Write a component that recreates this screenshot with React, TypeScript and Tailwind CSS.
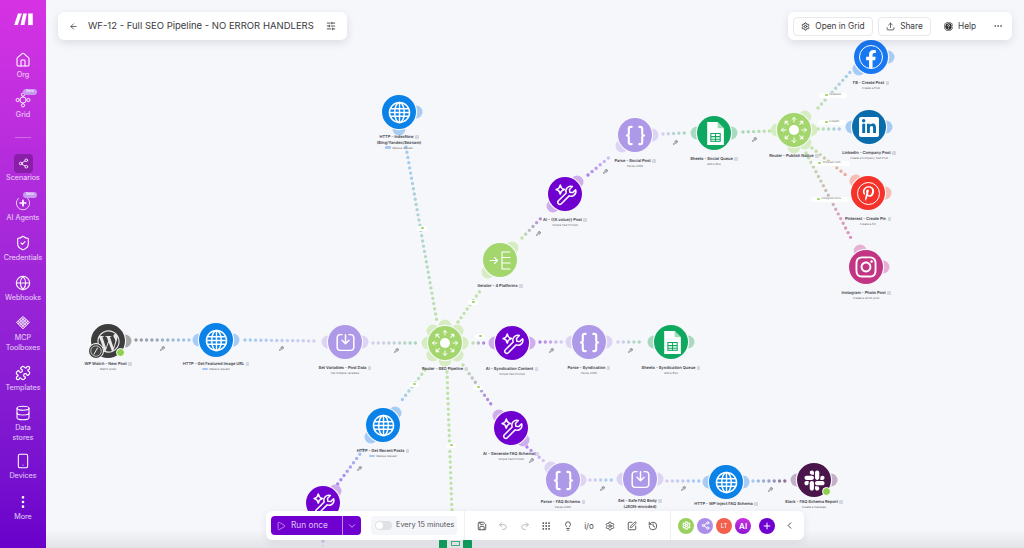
import type { ReactNode } from 'react';
import {
  ArrowLeft, Braces, CircleHelp, Database, Ellipsis, EllipsisVertical, Globe, History, House, Lightbulb, Play,
  Puzzle, Redo2, Save, Settings, Share2, ShieldCheck, Smartphone, SlidersHorizontal, SquarePen, Undo2, Upload,
  Wrench, ChevronDown, ChevronLeft, Plus, Grip,
} from 'lucide-react';
import { FaFacebookF, FaInstagram, FaLinkedinIn, FaPinterestP, FaSlack, FaWordpressSimple } from 'react-icons/fa';

const BLUE = '#0a82e8';
const VIOLET = '#7000d0';
const LILAC = '#ae98e8';
const GREEN = '#a4d66e';
const SHEET = '#0fa861';

type Kind = 'globe' | 'ai' | 'parse' | 'set' | 'sheet' | 'router' | 'iter' | 'fb' | 'li' | 'pin' | 'ig' | 'slack' | 'wp';

interface FlowNode {
  x: number;
  y: number;
  kind: Kind;
  label: string[];
  sub?: string;
  chip?: boolean;
  dy?: number;
  handles: [number, string][];
}

const hBlue = '#a6cbf4';
const hLilac = '#dcd3f5';
const hPurple = '#cfaeec';
const hGreen = '#d6edc2';
const hSheet = '#a9dabf';

const NODES: FlowNode[] = [
  { x: 108, y: 341, kind: 'wp', label: ['WP Watch - New Post'], sub: 'Watch posts', dy: 37, handles: [[0, '#a8a8a8']] },
  { x: 216, y: 340, kind: 'globe', label: ['HTTP - Get Featured Image URL'], sub: 'Make a request', chip: true, dy: 38, handles: [[180, hBlue], [0, hBlue]] },
  { x: 345, y: 342, kind: 'set', label: ['Set Variables - Post Data'], sub: 'Set multiple variables', handles: [[180, hLilac], [0, hLilac]] },
  { x: 445, y: 343, kind: 'router', label: ['Router - SEO Pipeline'], handles: [[180, hGreen], [0, hGreen], [-90, hGreen], [-45, hGreen], [-135, hGreen], [135, hGreen], [90, hGreen], [45, hGreen]] },
  { x: 512, y: 343, kind: 'ai', label: ['AI - Syndication Content'], sub: 'Simple Text Prompt', handles: [[180, hPurple], [0, hPurple]] },
  { x: 589, y: 342, kind: 'parse', label: ['Parse - Syndication'], sub: 'Parse JSON', handles: [[180, hLilac], [0, hLilac]] },
  { x: 671, y: 342, kind: 'sheet', label: ['Sheets - Syndication Queue'], sub: 'Add a Row', handles: [[180, hSheet], [0, hSheet]] },
  { x: 399, y: 112, kind: 'globe', label: ['HTTP - IndexNow', '(Bing/Yandex/Seznam)'], sub: 'Make a request', chip: true, dy: 39, handles: [[0, hBlue], [90, hBlue]] },
  { x: 500, y: 260, kind: 'iter', label: ['Iterator - 4 Platforms'], handles: [[-45, hGreen], [135, hGreen]] },
  { x: 565, y: 194, kind: 'ai', label: ['AI - {{8.value}} Post'], sub: 'Simple Text Prompt', handles: [[-45, hPurple], [135, hPurple]] },
  { x: 635, y: 135, kind: 'parse', label: ['Parse - Social Post'], sub: 'Parse JSON', handles: [[0, hLilac], [140, hLilac]] },
  { x: 714, y: 133, kind: 'sheet', label: ['Sheets - Social Queue'], sub: 'Add a Row', handles: [[180, hSheet], [0, hSheet]] },
  { x: 794, y: 130, kind: 'router', label: ['Router - Publish Native'], handles: [[180, hGreen], [0, hGreen], [-50, hGreen], [50, hGreen], [90, hGreen]] },
  { x: 871, y: 57, kind: 'fb', label: ['FB - Create Post'], sub: 'Create a Post', handles: [[0, hBlue], [135, hBlue]] },
  { x: 869, y: 127, kind: 'li', label: ['LinkedIn - Company Post'], sub: 'Create a Company Text Post', handles: [[180, hBlue], [0, hBlue]] },
  { x: 868, y: 193, kind: 'pin', label: ['Pinterest - Create Pin'], sub: 'Create a Pin', handles: [[-135, '#f7bcb4'], [0, '#f7bcb4']] },
  { x: 866, y: 267, kind: 'ig', label: ['Instagram - Photo Post'], sub: 'Create a photo post', handles: [[-110, '#e6b0d4'], [0, '#e6b0d4']] },
  { x: 383, y: 425, kind: 'globe', label: ['HTTP - Get Recent Posts'], sub: 'Make a request', chip: true, handles: [[-45, hBlue], [135, hBlue]] },
  { x: 511, y: 428, kind: 'ai', label: ['AI - Generate FAQ Schema'], sub: 'Simple Text Prompt', handles: [[-135, hPurple], [45, hPurple]] },
  { x: 563, y: 480, kind: 'parse', label: ['Parse - FAQ Schema'], sub: 'Parse JSON', dy: 36, handles: [[-135, hLilac], [0, hLilac]] },
  { x: 640, y: 479, kind: 'set', label: ['Set - Safe FAQ Body', '(JSON-encoded)'], dy: 36, handles: [[180, hLilac], [0, hLilac]] },
  { x: 726, y: 482, kind: 'globe', label: ['HTTP - WP Inject FAQ Schema'], dy: 36, handles: [[180, hBlue], [0, hBlue]] },
  { x: 814, y: 480, kind: 'slack', label: ['Slack - FAQ Schema Report'], sub: 'Create a message', dy: 36, handles: [[180, '#c3b0c6'], [0, '#c3b0c6']] },
  { x: 323, y: 503, kind: 'ai', label: [], handles: [[-45, hPurple]] },
];

const cBlue = '#a3c9f2';
const cLilac = '#d6ccf3';
const cPurple = '#ae7fe9';
const cGreen = '#bde3a6';
const cTeal = '#a5d8ba';

const EDGES: [number, number, number, number, string, string][] = [
  [136, 340, 190, 340, '#94979b', cBlue],
  [245, 340, 318, 341, cBlue, cLilac],
  [373, 343, 417, 343, cLilac, cTeal],
  [473, 343, 485, 343, cGreen, cPurple],
  [540, 342, 562, 342, cPurple, cLilac],
  [618, 342, 642, 342, cLilac, cTeal],
  [663, 134, 685, 133, cLilac, cTeal],
  [743, 132, 770, 131, cTeal, cGreen],
  [522, 238, 543, 216, cGreen, cPurple],
  [588, 175, 612, 155, cPurple, cLilac],
  [406, 147, 437, 322, cBlue, cGreen],
  [458, 322, 482, 288, cGreen, cGreen],
  [818, 108, 852, 70, cGreen, cBlue],
  [818, 129, 843, 129, cGreen, cBlue],
  [812, 148, 847, 176, cGreen, '#f2a498'],
  [806, 153, 852, 240, cGreen, '#de8cc0'],
  [425, 370, 402, 400, cGreen, cBlue],
  [363, 450, 337, 485, cBlue, cPurple],
  [447, 372, 453, 540, cGreen, cGreen],
  [463, 365, 493, 407, cGreen, cPurple],
  [527, 447, 545, 462, cPurple, cLilac],
  [590, 480, 613, 480, cLilac, cBlue],
  [667, 481, 700, 481, cLilac, cBlue],
  [753, 481, 787, 481, cBlue, '#8d6c92'],
  [323, 520, 323, 548, cPurple, cPurple],
];

const WRENCHES = [
  [162, 348], [281, 348], [396, 350], [551, 350], [630, 350], [359, 468], [531, 460], [605, 171], [538, 233],
  [675, 142], [754, 139], [602, 488], [683, 488], [770, 489],
];

const PILLS: [number, number, number, string][] = [
  [833, 95, 28, 'Facebook'], [832, 122, 28, 'LinkedIn'], [831, 163, 38, 'Pinterest (with ...'], [830, 199, 38, 'Instagram (Inclu...'],
  [480, 336, 10, ''], [414, 384, 10, ''], [478, 387, 10, ''], [451, 445, 9, ''], [422, 228, 10, ''], [473, 302, 10, ''],
];

function GlobeMark() {
  return (
    <svg viewBox="0 0 24 24" className="h-[23px] w-[23px]" fill="none" stroke="white" strokeWidth="1.5">
      <circle cx="12" cy="12" r="10.5" />
      <ellipse cx="12" cy="12" rx="5" ry="10.5" />
      <path d="M12 1.5v21M2.2 8h19.6M1.5 12h21M2.2 16h19.6" />
    </svg>
  );
}

function AiMark() {
  return (
    <svg viewBox="0 0 24 24" className="h-[25px] w-[25px]" fill="none" stroke="white" strokeWidth="1.5" strokeLinejoin="round">
      <path d="M7 3c.5 2.8 1.4 3.7 4 4.3-2.6.6-3.5 1.5-4 4.3-.5-2.8-1.4-3.7-4-4.3 2.6-.6 3.5-1.5 4-4.3Z" />
      <path d="M21.5 6.8a5 5 0 0 1-6.6 6.3l-8 8a2.1 2.1 0 0 1-3-3l8-8a5 5 0 0 1 6.3-6.6l-3 3 .4 2.9 2.9.4 3-3Z" transform="translate(1.5 1) scale(.94)" />
    </svg>
  );
}

function SetMark() {
  return (
    <svg viewBox="0 0 24 24" className="h-[21px] w-[21px]" fill="none" stroke="white" strokeWidth="1.7" strokeLinecap="round" strokeLinejoin="round">
      <path d="M8 3H6a3.5 3.5 0 0 0-3.5 3.5v11A3.5 3.5 0 0 0 6 21h12a3.5 3.5 0 0 0 3.5-3.5v-11A3.5 3.5 0 0 0 18 3h-2" />
      <path d="M12 3v10M8 9.5l4 4 4-4" />
    </svg>
  );
}

function SheetMark() {
  return (
    <svg viewBox="0 0 24 24" className="h-[25px] w-[25px]">
      <path d="M5 1h10l6 6v16H5z" fill="white" />
      <path d="M15 1v6h6z" fill="#9fdcbc" />
      <path d="M8 11.5h10v8.5H8z" fill={SHEET} />
      <path d="M9 12.5h3.5v2H9zM13.5 12.5H17v2h-3.5zM9 15.5h3.5V17H9zM13.5 15.5H17V17h-3.5zM9 18h3.5v1H9zM13.5 18H17v1h-3.5z" fill="white" />
    </svg>
  );
}

function RouterMark() {
  const angles = [0, 45, 90, 135, 180, 225, 270, 315];
  return (
    <svg viewBox="0 0 34 34" className="h-[34px] w-[34px]" fill="none" stroke="white" strokeWidth="1" strokeLinecap="round" strokeLinejoin="round">
      <circle cx="17" cy="17" r="5" fill="white" stroke="none" />
      {angles.map(a => (
        <g key={a} transform={`rotate(${a} 17 17)`}>
          <path d="M25 17h4.500M27.500 15l2 2-2 2" />
        </g>
      ))}
    </svg>
  );
}

function IterMark() {
  return (
    <svg viewBox="0 0 34 34" className="h-[34px] w-[34px]" fill="none" stroke="white" strokeWidth="1.1" strokeLinecap="round" strokeLinejoin="round">
      <path d="M7 17.5h7M11.5 14.5l3 3-3 3" />
      <path d="M22 9h-3v17h3M19 9h8M19 14.5h8M19 20h8M19 26h8" />
    </svg>
  );
}

function NodeIcon({ kind }: { kind: Kind }) {
  switch (kind) {
    case 'globe': return <GlobeMark />;
    case 'ai': return <AiMark />;
    case 'parse': return <Braces className="h-[23px] w-[23px] text-white" strokeWidth={2.2} />;
    case 'set': return <SetMark />;
    case 'sheet': return <SheetMark />;
    case 'router': return <RouterMark />;
    case 'iter': return <IterMark />;
    case 'fb': return (
      <span className="flex h-[24px] w-[24px] items-end justify-center overflow-hidden rounded-full border-[1.5px] border-white">
        <FaFacebookF className="h-[18px] w-[18px] text-white" />
      </span>
    );
    case 'li': return <FaLinkedinIn className="h-[20px] w-[20px] rounded-[2px] bg-white p-[2px] text-[#0a6cab]" />;
    case 'pin': return <span className="flex h-[23px] w-[23px] items-center justify-center rounded-full border border-white"><FaPinterestP className="h-[15px] w-[15px] text-white" /></span>;
    case 'ig': return <FaInstagram className="h-[24px] w-[24px] text-white" />;
    case 'slack': return <FaSlack className="h-[23px] w-[23px] text-white" />;
    case 'wp': return <FaWordpressSimple className="h-[23px] w-[23px] text-[#e8e8e8]" />;
  }
}

const FILL: Record<Kind, string> = {
  globe: BLUE, ai: VIOLET, parse: LILAC, set: LILAC, sheet: SHEET, router: GREEN, iter: GREEN,
  fb: '#1877f2', li: '#0a6cab', pin: '#f5332a', ig: '#c13584', slack: '#4a154b', wp: '#3d3d3d',
};

function Node({ node }: { node: FlowNode }) {
  return (
    <div className="absolute h-[34px] w-[34px]" style={{ left: node.x - 17, top: node.y - 17 }}>
      <div className="flex h-full w-full items-center justify-center rounded-full" style={{ backgroundColor: FILL[node.kind] }}>
        <NodeIcon kind={node.kind} />
      </div>
      {node.kind === 'wp' && (
        <div className="absolute left-[-3px] top-[19px] flex h-[16px] w-[16px] items-center justify-center rounded-full border border-white bg-[#444]">
          <svg viewBox="0 0 16 16" className="h-[14px] w-[14px]" fill="none" stroke="white" strokeWidth="1">
            <circle cx="8" cy="8" r="6" strokeWidth=".7" />
            <path d="M5.5 12 10 4" />
          </svg>
        </div>
      )}
      {(node.kind === 'wp' || node.kind === 'slack') && (
        <div className="absolute left-[25px] top-[24px] h-[9px] w-[9px] rounded-full border border-white bg-[#8fd14f]" />
      )}
      <div className="absolute left-1/2 flex w-[100px] -translate-x-1/2 flex-col items-center whitespace-nowrap [text-rendering:geometricPrecision]" style={{ top: node.dy ?? 40 }}>
        {node.label.map((line, i) => (
          <div key={line} className="flex items-center gap-[1.5px] text-[4px] font-semibold leading-[5.5px] text-[#3c3c44]">
            {line}
            {i === 0 && <span className="inline-block h-[3.5px] w-[3.5px] rounded-[0.5px] bg-[#d6d8de]" />}
          </div>
        ))}
        {node.sub && (
          <div className="mt-[0.5px] flex items-center gap-[1px] text-[2.8px] leading-[4px] text-[#666]">
            {node.chip && <span className="inline-block h-[2.5px] w-[6px] rounded-[1px] bg-[#a9c6f5]" />}
            {node.sub}
          </div>
        )}
      </div>
    </div>
  );
}

function Graph() {
  return (
    <div className="absolute left-[-46px] top-0 h-[548px] w-[1024px]">
      <svg className="absolute inset-0" width="1024" height="548" viewBox="0 0 1024 548">
        <defs>
          {EDGES.map(([x1, y1, x2, y2, from, to], i) => (
            <linearGradient key={i} id={`edge${i}`} gradientUnits="userSpaceOnUse" x1={x1} y1={y1} x2={x2 + 0.01} y2={y2 + 0.01}>
              <stop offset="0" stopColor={from} />
              <stop offset="1" stopColor={to} />
            </linearGradient>
          ))}
        </defs>
        {EDGES.map(([x1, y1, x2, y2], i) => (
          <line key={i} x1={x1} y1={y1} x2={x2} y2={y2 + 0.01} stroke={`url(#edge${i})`} strokeWidth="3.4" strokeLinecap="round" strokeDasharray="0 5.3" />
        ))}
        {NODES.map((n, i) => n.handles.map(([angle, color]) => (
          <circle
            key={`${i}-${angle}`}
            cx={n.x + 17 * Math.cos((angle * Math.PI) / 180)}
            cy={n.y + 17 * Math.sin((angle * Math.PI) / 180)}
            r="6.5"
            fill={color}
          />
        )))}
        {NODES.map((n, i) => <circle key={i} cx={n.x} cy={n.y} r="18.2" fill="#f6f7fb" />)}
      </svg>
      {NODES.map((n, i) => <Node key={i} node={n} />)}
      {WRENCHES.map(([x, y], i) => (
        <div key={i} className="absolute" style={{ left: x - 2.5, top: y - 2.5 }}>
          <Wrench className="h-[5px] w-[5px] text-[#55585e]" strokeWidth={3} />
        </div>
      ))}
      {PILLS.map(([x, y, w, text], i) => (
        <div
          key={i}
          className="absolute flex h-[5px] items-center justify-center gap-[1.5px] whitespace-nowrap rounded-full bg-white text-[2.6px] text-[#666] [text-rendering:geometricPrecision]"
          style={{ left: x - w / 2, top: y - 2.5, width: w }}
        >
          <span className="h-[1.5px] w-[3px] rounded-full bg-[#9ed36a]" />
          {text}
        </div>
      ))}
    </div>
  );
}

function MakeLogo() {
  return (
    <svg viewBox="0 0 20 14" className="h-[13px] w-[19px]" fill="white">
      <path d="M4 0.5h4.200L3.800 13H0z" />
      <path d="M9.600 0.5h4L11 13H6.800z" />
      <path d="M15 0.5h5V13h-5z" />
    </svg>
  );
}

function GridGlyph() {
  return (
    <svg viewBox="0 0 24 24" className="h-4 w-4" fill="none" stroke="white" strokeWidth="1.4">
      <circle cx="12" cy="12" r="4.6" />
      <circle cx="12" cy="4" r="2.4" />
      <circle cx="12" cy="20" r="2.4" />
      <circle cx="4" cy="12" r="2.4" />
      <circle cx="20" cy="12" r="2.4" />
    </svg>
  );
}

function AgentGlyph() {
  return (
    <svg viewBox="0 0 24 24" className="h-4 w-4" fill="none" stroke="white" strokeWidth="1.4" strokeLinecap="round">
      <path d="M5 5a10 10 0 1 0 14 0" opacity=".8" />
      <path d="M12 8v8M8 12h8" strokeWidth="2.6" />
    </svg>
  );
}

function McpGlyph() {
  return (
    <svg viewBox="0 0 24 24" className="h-4 w-4" fill="none" stroke="white" strokeWidth="1">
      <path d="M12 2 22 11 12 21 2 11Z" fill="white" fillOpacity=".35" />
      <path d="M7 6.5 17 16M9.5 4.2 19.5 13.5M4.5 9 14.5 18.5M17 6.5 7 16M14.5 4.2 4.5 13.5M19.5 9 9.500 18.5" />
    </svg>
  );
}

function NavItem({ icon, label, beta, active, className }: { icon: ReactNode; label: string; beta?: boolean; active?: boolean; className?: string }) {
  return (
    <div className={`relative flex w-full flex-col items-center ${className ?? ''}`}>
      <div className="relative flex h-4 w-4 items-center justify-center">
        {active && <div className="absolute h-[19px] w-[19px] rounded-[4px] bg-[#8a1ea8]" />}
        <div className="relative">{icon}</div>
        {beta && <div className="absolute left-[8px] top-[-3px] flex h-[6px] w-[14px] items-center justify-center rounded-full bg-[#c79af0] text-[3.5px] text-white">Beta</div>}
      </div>
      <div className="mt-[2px] w-[40px] whitespace-pre-line text-center text-[7.2px] leading-[10px] text-white/80">{label}</div>
    </div>
  );
}

function Sidebar() {
  const ic = 'h-4 w-4 text-white';
  return (
    <div className="z-20 flex h-full w-[46px] shrink-0 flex-col items-center bg-linear-to-b from-[#d632e3] to-[#6a00cb] pt-[13px]">
      <MakeLogo />
      <NavItem className="mt-[26px]" icon={<House className={ic} strokeWidth={1.6} />} label="Org" />
      <NavItem className="mt-3" icon={<GridGlyph />} label="Grid" beta />
      <div className="mt-[17px] h-px w-4 bg-white/30" />
      <NavItem className="mt-[17px]" icon={<Share2 className="h-[11px] w-[11px] text-white" strokeWidth={1.8} />} label="Scenarios" active />
      <NavItem className="mt-3" icon={<AgentGlyph />} label="AI Agents" beta />
      <NavItem className="mt-3" icon={<ShieldCheck className={ic} strokeWidth={1.6} />} label="Credentials" />
      <NavItem className="mt-3" icon={<Globe className={ic} strokeWidth={1.6} />} label="Webhooks" />
      <NavItem className="mt-3" icon={<McpGlyph />} label="MCP Toolboxes" />
      <NavItem className="mt-3" icon={<Puzzle className={ic} strokeWidth={1.8} />} label="Templates" />
      <NavItem className="mt-3" icon={<Database className={ic} strokeWidth={1.6} />} label={'Data\nstores'} />
      <NavItem className="mt-[10px]" icon={<Smartphone className={ic} strokeWidth={1.6} />} label="Devices" />
      <NavItem className="mt-[13px]" icon={<EllipsisVertical className={ic} strokeWidth={2} />} label="More" />
    </div>
  );
}

function TopBars() {
  return (
    <>
      <div className="absolute left-[12px] top-[12px] flex h-[28px] w-[289px] items-center rounded-md bg-white pl-[11px] pr-[11px] text-[#3a3a40] shadow-[0_3px_8px_rgba(30,30,60,0.12)]">
        <ArrowLeft className="h-[9px] w-[9px] shrink-0" strokeWidth={2} />
        <span className="ml-[10px] flex-1 whitespace-nowrap text-[9.5px]">WF-12 - Full SEO Pipeline - NO ERROR HANDLERS</span>
        <SlidersHorizontal className="h-[10px] w-[10px] shrink-0" strokeWidth={2} />
      </div>
      <div className="absolute left-[742px] top-[12px] z-10 flex h-[28px] w-[224px] items-center rounded-md bg-white pl-[5px] text-[8.3px] text-[#3a3a40] shadow-[0_3px_8px_rgba(30,30,60,0.12)]">
        <div className="flex h-[19px] w-[80px] items-center justify-center gap-[5px] rounded-[4px] border border-[#e8e9ee]">
          <Settings className="h-[9px] w-[9px] shrink-0" strokeWidth={2.6} />
          Open in Grid
        </div>
        <div className="ml-[5px] flex h-[19px] w-[53px] items-center justify-center gap-[5px] rounded-[4px] border border-[#e8e9ee]">
          <Upload className="h-[9px] w-[9px] shrink-0" strokeWidth={2} />
          Share
        </div>
        <CircleHelp className="ml-[13px] h-[9px] w-[9px] shrink-0 rounded-full bg-[#333] text-white" strokeWidth={2} />
        <span className="ml-[5px]">Help</span>
        <Ellipsis className="ml-[17px] h-[10px] w-[10px] shrink-0 text-[#555]" strokeWidth={2} />
      </div>
    </>
  );
}

function Toolbar() {
  const ic = 'h-[10px] w-[10px] text-[#3f3f46] shrink-0';
  const dot = 'flex h-[16px] w-[16px] shrink-0 items-center justify-center rounded-full text-white';
  return (
    <div className="absolute left-[220px] top-[511px] z-10 flex h-[29px] w-[538px] items-center rounded-md bg-white pl-[5px] shadow-[0_2px_8px_rgba(30,30,60,0.08)]">
      <div className="flex h-[19px] w-[90px] items-center rounded-[4px] bg-[#6f00d0] text-[8.3px] text-[#dcc4f5]">
        <div className="flex w-[71px] items-center gap-[5px] pl-[5px]">
          <Play className="h-[10px] w-[10px] shrink-0" strokeWidth={1.6} />
          Run once
        </div>
        <div className="flex h-full flex-1 items-center justify-center border-l border-[#b893e6]">
          <ChevronDown className="h-[10px] w-[10px]" strokeWidth={2} />
        </div>
      </div>
      <div className="ml-[10px] flex h-[19px] w-[86px] items-center gap-[4px] whitespace-nowrap rounded-[4px] bg-[#f5f6f9] pl-[4px] text-[7.3px] text-[#55555c]">
        <div className="flex h-[9px] w-[17px] shrink-0 items-center rounded-full bg-[#dfe1e6] pl-px">
          <div className="h-[7px] w-[7px] rounded-full bg-white" />
        </div>
        Every 15 minutes
      </div>
      <div className="ml-[7px] h-full w-px bg-[#eeeff3]" />
      <div className="ml-[12px] flex items-center gap-[11.4px]">
        <Save className={ic} strokeWidth={2} />
        <Undo2 className={`${ic} opacity-40`} strokeWidth={2} />
        <Redo2 className={`${ic} opacity-40`} strokeWidth={2} />
        <Grip className={ic} strokeWidth={2} />
        <Lightbulb className={ic} strokeWidth={2} />
        <span className="w-[10px] text-center text-[8px] leading-none text-[#3f3f46]">i/o</span>
        <Settings className={ic} strokeWidth={2} />
        <SquarePen className={ic} strokeWidth={2} />
        <History className={ic} strokeWidth={2} />
      </div>
      <div className="ml-[12px] h-full w-px bg-[#eeeff3]" />
      <div className="ml-[7px] flex items-center gap-[3px]">
        <div className={`${dot} bg-[#9ad05f]`}><Settings className="h-[9px] w-[9px]" strokeWidth={3} /></div>
        <div className={`${dot} bg-[#ab8fe8]`}><Share2 className="h-[9px] w-[9px]" strokeWidth={2.4} /></div>
        <div className={`${dot} bg-[#f2604e] text-[6px]`}>LT</div>
        <div className={`${dot} bg-linear-to-b from-[#c92fdc] to-[#8f12d4] text-[8px] font-semibold`}>AI</div>
      </div>
      <div className={`${dot} ml-[8px] bg-[#6f00d0]`}><Plus className="h-[10px] w-[10px]" strokeWidth={2.4} /></div>
      <ChevronLeft className="ml-[9px] h-[11px] w-[11px] text-[#3f3f46]" strokeWidth={2} />
    </div>
  );
}

// the sheets module below the fold only peeks out under the toolbar
function PeekingSheet() {
  return (
    <div className="absolute left-[393px] top-[539px] flex h-[9px] w-[33px]">
      <div className="w-[8px] rounded-t-[2px] bg-[#0f9d5c]" />
      <div className="flex flex-1 justify-center pt-[2px]">
        <div className="h-[5px] w-[9px] border border-[#3fb382]" />
      </div>
      <div className="w-[9px] rounded-t-[2px] bg-[#0f9d5c]" />
    </div>
  );
}

export default function App() {
  return (
    <div className="flex h-[548px] w-[1024px] overflow-hidden bg-[#f6f7fb] font-['Inter',sans-serif]">
      <Sidebar />
      <div className="relative flex-1">
        <Graph />
        <div className="absolute bottom-0 left-0 right-0 h-[18px] bg-linear-to-b from-transparent to-[#e2e3e6]" />
        <PeekingSheet />
        <TopBars />
        <Toolbar />
      </div>
    </div>
  );
}
